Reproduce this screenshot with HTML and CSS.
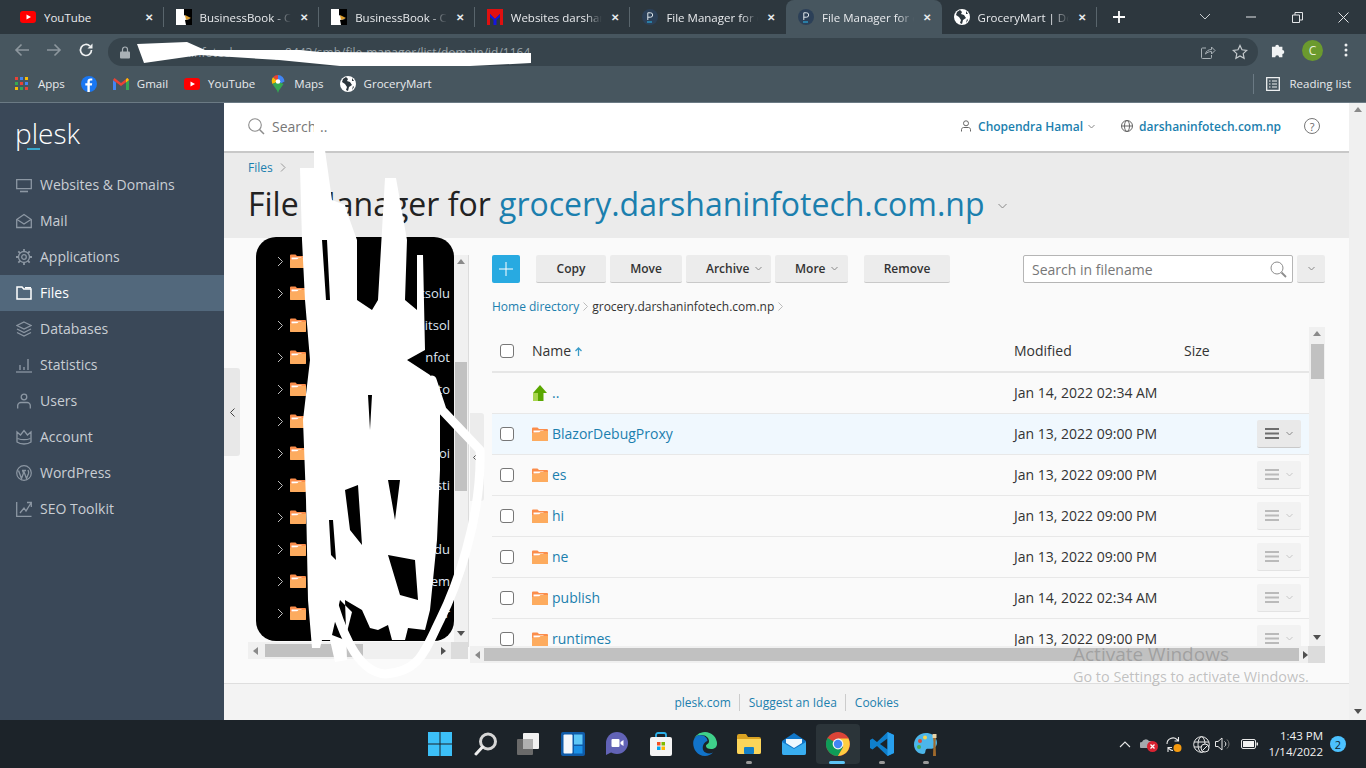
FILE: index.html
```html
<!DOCTYPE html>
<html>
<head>
    <meta charset="UTF-8">
    <title>File Manager for grocery.darshaninfotech.com.np</title>
    <link rel="stylesheet" href="styles.css">
</head>
<body>
    <svg class="defs" width="0" height="0">
        <symbol id="folder" viewBox="0 0 16 14">
            <path d="M0 1.500a1 1 0 0 1 1-1h4.500l1.500 1.500h8a1 1 0 0 1 1 1V13a1 1 0 0 1-1 1H1a1 1 0 0 1-1-1z" fill="#fb8d4b"/>
            <path d="M1.500 3.500h10v2h-10z" fill="#fff"/>
            <path d="M0 6l7-.5 1.500-1.500H16V13a1 1 0 0 1-1 1H1a1 1 0 0 1-1-1z" fill="#fdab5e"/>
        </symbol>
        <symbol id="menu" viewBox="0 0 14 11">
            <path d="M0 0h14v2H0zM0 4.500h14v2H0zM0 9h14v2H0z" fill="#6e6e6e"/>
        </symbol>
        <symbol id="plesk-p" viewBox="0 0 16 16">
            <circle cx="8" cy="8" r="8" fill="#2c4058"/>
            <path d="M5.800 11V3.800h2.700a2.200 2.200 0 0 1 0 4.400H5.800" fill="none" stroke="#dfe6ec" stroke-width="1"/>
            <path d="M5 13h5" stroke="#2aa7d8" stroke-width="1.200"/>
        </symbol>
        <symbol id="bird" viewBox="0 0 16 16">
            <path d="M0 0h16v16H0z" fill="#fff"/>
            <path d="M8 0h8v16H10L9 11l5-1-6-4z" fill="#000"/>
            <path d="M9 6l6 3-5 2z" fill="#d99a28"/>
        </symbol>
        <symbol id="globe" viewBox="0 0 16 16">
            <circle cx="8" cy="8" r="8" fill="#fff"/>
            <path d="M6 1L3 3 2 6l3 2 2 3-1 3 2 1 1-4 3-2-2-3-3-1 1-2zM12 2l2 3-2 0zM13 10l1 1-2 3z" fill="#2c363d"/>
        </symbol>
        <symbol id="yt" viewBox="0 0 16 12">
            <rect width="16" height="12" rx="3" fill="#f00"/>
            <path d="M6.500 3.500v5L11 6z" fill="#fff"/>
        </symbol>
        <symbol id="caret" viewBox="0 0 7 5">
            <path d="M.5 1l3 3 3-3" fill="none" stroke="#888"/>
        </symbol>
        <symbol id="tree-chev" viewBox="0 0 7 11">
            <path d="M1 1l4.500 4.500L1 10" fill="none" stroke="#bdbdbd" stroke-width="1"/>
        </symbol>
    </svg>

    <!-- browser chrome -->
    <div class="tabstrip">
        <div class="tab sep"><svg class="fav" width="16" height="12"><use href="#yt"/></svg><span class="tab-title">YouTube</span><span class="tab-x">✕</span></div>
        <div class="tab sep"><svg class="fav" width="16" height="16"><use href="#bird"/></svg><span class="tab-title">BusinessBook - C</span><span class="tab-x">✕</span></div>
        <div class="tab sep"><svg class="fav" width="16" height="16"><use href="#bird"/></svg><span class="tab-title">BusinessBook - C</span><span class="tab-x">✕</span></div>
        <div class="tab sep"><svg class="fav" width="16" height="16" viewBox="0 0 16 16"><path d="M0 0h16v16h-3V5L8 10 3 5v11H0z" fill="#e01010"/><path d="M3 5l5 5 5-5v3l-3.500 3v5h-3v-5L3 8z" fill="#1515e0"/></svg><span class="tab-title">Websites darshan</span><span class="tab-x">✕</span></div>
        <div class="tab"><svg class="fav" width="16" height="16"><use href="#plesk-p"/></svg><span class="tab-title">File Manager for c</span><span class="tab-x">✕</span></div>
        <div class="tab active"><svg class="fav" width="16" height="16"><use href="#plesk-p"/></svg><span class="tab-title">File Manager for c</span><span class="tab-x">✕</span></div>
        <div class="tab sep"><svg class="fav" width="16" height="16"><use href="#globe"/></svg><span class="tab-title">GroceryMart | Do</span><span class="tab-x">✕</span></div>
        <svg class="newtab" width="14" height="14" viewBox="0 0 14 14"><path d="M7 1v12M1 7h12" stroke="#fff" stroke-width="1.800"/></svg>
        <div class="winctl">
            <span><svg width="12" height="8" viewBox="0 0 12 8"><path d="M1 1l5 5 5-5" fill="none" stroke="#c8cdd0"/></svg></span>
            <span><svg width="10" height="2" viewBox="0 0 10 2"><path d="M0 1h10" stroke="#e4e6e8"/></svg></span>
            <span><svg width="11" height="11" viewBox="0 0 11 11"><path d="M.5 3h7v7.500h-7zM3 3V.5h7.500V8H8" fill="none" stroke="#e4e6e8"/></svg></span>
            <span><svg width="11" height="11" viewBox="0 0 11 11"><path d="M.5.5l10 10M10.500.5l-10 10" stroke="#e4e6e8"/></svg></span>
        </div>
    </div>

    <div class="toolbar">
        <span class="nav"><svg width="16" height="14" viewBox="0 0 16 14"><path d="M15 7H2M7.500 1.500L2 7l5.500 5.500" fill="none" stroke="#8d979e" stroke-width="1.600"/></svg></span>
        <span class="nav"><svg width="16" height="14" viewBox="0 0 16 14"><path d="M1 7h13M8.500 1.500L14 7l-5.500 5.500" fill="none" stroke="#8d979e" stroke-width="1.600"/></svg></span>
        <span class="nav"><svg width="16" height="16" viewBox="0 0 16 16"><path d="M13.500 8a5.500 5.500 0 1 1-1.600-3.900" fill="none" stroke="#eef0f1" stroke-width="1.700"/><path d="M14.500 1.500v5h-5z" fill="#eef0f1"/></svg></span>
        <div class="address">
            <svg width="10" height="13" viewBox="0 0 10 13"><path d="M2.500 6V3.500a2.500 2.500 0 0 1 5 0V6" fill="none" stroke="#a9b1b6" stroke-width="1.200"/><rect y="5.500" width="10" height="7" rx="1" fill="#a9b1b6"/></svg>
            <span class="url">darshaninfotech.com.np:8443/smb/file-manager/list/domain/id/1164</span>
            <svg class="addr-share" width="16" height="16" viewBox="0 0 16 16"><path d="M6 4H2.500a1 1 0 0 0-1 1v8.500a1 1 0 0 0 1 1h8a1 1 0 0 0 1-1V11" fill="none" stroke="#a9b1b6"/><path d="M5.500 10c.5-3 3-4.500 6-4.500V3l3.500 3.500L11.500 10V7.500c-2.500 0-4.500 1-6 2.500z" fill="none" stroke="#a9b1b6"/></svg>
            <svg width="16" height="16" viewBox="0 0 16 16"><path d="M8 1.500l2 4.300 4.700.6-3.500 3.200.9 4.700L8 12l-4.100 2.300.9-4.700L1.300 6.400 6 5.800z" fill="none" stroke="#c6cbce" stroke-width="1.200"/></svg>
        </div>
        <svg class="ext" width="16" height="16" viewBox="0 0 16 16"><path d="M1 5h3.500a2 2 0 1 1 4 0H12v3.500a2 2 0 1 1 0 4V16H8.500a2 2 0 1 0-4 0H1z" fill="#f1f3f4" transform="scale(.95)"/></svg>
        <span class="avatar">C</span>
        <svg class="dots" width="4" height="14" viewBox="0 0 4 14"><circle cx="2" cy="2" r="1.500" fill="#eef0f1"/><circle cx="2" cy="7" r="1.500" fill="#eef0f1"/><circle cx="2" cy="12" r="1.500" fill="#eef0f1"/></svg>
    </div>

    <div class="bookmarks">
        <span class="bm bm-apps"><svg width="14" height="14" viewBox="0 0 14 14"><path d="M0 0h3v3H0z" fill="#ea4335"/><path d="M5 0h3v3H5z" fill="#4285f4"/><path d="M10 0h3v3h-3z" fill="#fbbc04"/><path d="M0 5h3v3H0z" fill="#34a853"/><path d="M5 5h3v3H5z" fill="#ea4335"/><path d="M10 5h3v3h-3z" fill="#4285f4"/><path d="M0 10h3v3H0z" fill="#fbbc04"/><path d="M5 10h3v3H5z" fill="#34a853"/><path d="M10 10h3v3h-3z" fill="#ea4335"/></svg>Apps</span>
        <span class="bm"><svg width="16" height="16" viewBox="0 0 16 16"><circle cx="8" cy="8" r="8" fill="#1a77f2"/><path d="M8.800 16V9.500h2l.4-2.300H8.800V5.800c0-.7.300-1.200 1.300-1.200h1.200v-2C10.900 2.500 10.300 2.400 9.600 2.400 7.700 2.400 6.400 3.500 6.400 5.500v1.700H4.300v2.300h2.100V16z" fill="#fff"/></svg></span>
        <span class="bm"><svg width="16" height="12" viewBox="0 0 16 12"><path d="M0 2v10h3V4.500z" fill="#4285f4"/><path d="M16 2v10h-3V4.500z" fill="#34a853"/><path d="M0 2l8 6 8-6-1.500-2L8 5 1.500 0z" fill="#ea4335"/><path d="M13 4.500L16 2l-1.500-2L13 1z" fill="#fbbc04"/></svg>Gmail</span>
        <span class="bm"><svg width="16" height="12"><use href="#yt"/></svg>YouTube</span>
        <span class="bm bm-maps"><svg width="14" height="18" viewBox="0 0 14 18"><path d="M7 0a6.500 6.500 0 0 1 6.500 6.500L7 10z" fill="#4285f4"/><path d="M7 0A6.500 6.500 0 0 0 2 2.300L7 6.500z" fill="#ea4335"/><path d="M2 2.300A6.500 6.500 0 0 0 1.500 9L7 6.500z" fill="#fbbc04"/><path d="M1.500 9C3 12 6 14 7 18c1-4 4-6 5.500-9L7 6.500z" fill="#34a853"/><circle cx="7" cy="6.500" r="2.300" fill="#fff"/></svg>Maps</span>
        <span class="bm"><svg width="16" height="16"><use href="#globe"/></svg>GroceryMart</span>
        <span class="reading"><svg width="14" height="14" viewBox="0 0 14 14"><path d="M.7.700h12.600v12.600H.7z" fill="none" stroke="#eef0f1" stroke-width="1.300"/><path d="M3 4h1.500M6 4h5M3 7h1.500M6 7h5M3 10h1.500M6 10h5" stroke="#eef0f1"/></svg>Reading list</span>
    </div>

    <!-- plesk app -->
    <div class="app">
        <aside class="sidebar">
            <div class="logo">plesk<i class="logo-bar"></i></div>
            <a class="side-item"><svg width="16" height="16" viewBox="0 0 16 16"><path d="M.7 2.700h14.600v9H.7z" fill="none" stroke="currentColor" stroke-width="1.300"/><path d="M4 14.500h8" stroke="currentColor" stroke-width="1.600"/></svg>Websites &amp; Domains</a>
            <a class="side-item"><svg width="16" height="16" viewBox="0 0 16 16"><path d="M.7 6.500L8 1.500l7.300 5v8H.7z" fill="none" stroke="currentColor" stroke-width="1.300"/><path d="M1 6.500L8 11l7-4.500" fill="none" stroke="currentColor" stroke-width="1.300"/></svg>Mail</a>
            <a class="side-item"><svg width="16" height="16" viewBox="0 0 16 16"><circle cx="8" cy="8" r="2.300" fill="none" stroke="currentColor" stroke-width="1.300"/><circle cx="8" cy="8" r="5.500" fill="none" stroke="currentColor" stroke-width="1.300"/><path d="M8 0v3M8 13v3M0 8h3M13 8h3M2.300 2.300l2 2M11.700 11.700l2 2M13.700 2.300l-2 2M4.300 11.700l-2 2" stroke="currentColor" stroke-width="1.800"/></svg>Applications</a>
            <a class="side-item active"><svg width="16" height="16" viewBox="0 0 16 16"><path d="M1 2h5l1.800 2H15v10H1z" fill="none" stroke="currentColor" stroke-width="1.500"/><path d="M9 2h6v1.500H9z" fill="currentColor"/></svg>Files</a>
            <a class="side-item"><svg width="16" height="16" viewBox="0 0 16 16"><path d="M8 1l7 3.500L8 8 1 4.500z" fill="none" stroke="currentColor" stroke-width="1.200"/><path d="M1 8l7 3.500L15 8M1 11.500L8 15l7-3.500" fill="none" stroke="currentColor" stroke-width="1.300"/></svg>Databases</a>
            <a class="side-item"><svg width="16" height="16" viewBox="0 0 16 16"><path d="M0 15h16" stroke="currentColor" stroke-width="1.300"/><path d="M4 8v5M8 10v3M12 2v11" stroke="currentColor" stroke-width="1.400"/></svg>Statistics</a>
            <a class="side-item"><svg width="16" height="16" viewBox="0 0 16 16"><circle cx="8" cy="4" r="2.800" fill="none" stroke="currentColor" stroke-width="1.300"/><path d="M1.700 15.500V12.500c0-2 2-3 3-3h6.600c1 0 3 1 3 3v3" fill="none" stroke="currentColor" stroke-width="1.300"/></svg>Users</a>
            <a class="side-item"><svg width="16" height="16" viewBox="0 0 16 16"><path d="M1 3l3.500 3L8 1.500 11.500 6 15 3v10c-2 1.500-4.500 2-7 2s-5-.5-7-2z" fill="none" stroke="currentColor" stroke-width="1.300"/><path d="M1.500 9.500c4 1.500 9 1.500 13 0" fill="none" stroke="currentColor" stroke-width="1.300"/></svg>Account</a>
            <a class="side-item"><svg width="16" height="16" viewBox="0 0 16 16"><circle cx="8" cy="8" r="7.300" fill="none" stroke="currentColor" stroke-width="1.200"/><path d="M2.500 5.500l3 8 2-5.500-1-2.500M6 5.500h4M7.500 5.500l3 8 2-5c.5-1.500 0-2.500-.5-3.500" fill="none" stroke="currentColor" stroke-width="1.300"/></svg>WordPress</a>
            <a class="side-item"><svg width="16" height="16" viewBox="0 0 16 16"><path d="M.7 1v14.300H15.500" fill="none" stroke="currentColor" stroke-width="1.300"/><path d="M4 12l4-5 2 3 5-8M11 1.500h4.300V6" fill="none" stroke="currentColor" stroke-width="1.300"/></svg>SEO Toolkit</a>
        </aside>

        <div class="page">
            <header class="topbar">
                <svg width="17" height="17" viewBox="0 0 17 17"><circle cx="7" cy="7" r="6.300" fill="none" stroke="#8c8c8c" stroke-width="1.100"/><path d="M11.500 11.500l4.500 4.500" stroke="#8c8c8c" stroke-width="1.500"/></svg>
                <span class="top-search">Search ..</span>
                <svg class="user-ico" width="12" height="12" viewBox="0 0 12 12"><circle cx="6" cy="3.300" r="2.500" fill="none" stroke="#666"/><path d="M1.500 11.500V9.500c0-1 1-2 2-2h5c1 0 2 1 2 2v2" fill="none" stroke="#666"/></svg>
                <a class="top-link">Chopendra Hamal</a>
                <svg class="mini" width="7" height="5"><use href="#caret"/></svg>
                <svg class="globe-ico" width="12" height="12" viewBox="0 0 12 12"><circle cx="6" cy="6" r="5.500" fill="none" stroke="#666"/><ellipse cx="6" cy="6" rx="2.500" ry="5.500" fill="none" stroke="#666"/><path d="M.5 6h11" stroke="#666"/></svg>
                <a class="top-link">darshaninfotech.com.np</a>
                <span class="help">?</span>
            </header>

            <section class="band">
                <div class="crumb"><a>Files</a><svg width="6" height="9" viewBox="0 0 6 9"><path d="M1 .5l4 4-4 4" fill="none" stroke="#999"/></svg></div>
                <h1>File Manager for <a>grocery.darshaninfotech.com.np</a><svg width="9" height="6" viewBox="0 0 9 6"><path d="M.5 1l4 4 4-4" fill="none" stroke="#888"/></svg></h1>
            </section>

            <main class="main">
                <div class="tree-pane">
                    <div class="tree-top">
                        <div class="tree">
                            <div class="tree-row"><svg width="7" height="11"><use href="#tree-chev"/></svg><svg width="16" height="14"><use href="#folder"/></svg><span></span></div>
                            <div class="tree-row"><svg width="7" height="11"><use href="#tree-chev"/></svg><svg width="16" height="14"><use href="#folder"/></svg><span>itsolu</span></div>
                            <div class="tree-row"><svg width="7" height="11"><use href="#tree-chev"/></svg><svg width="16" height="14"><use href="#folder"/></svg><span>itsol</span></div>
                            <div class="tree-row"><svg width="7" height="11"><use href="#tree-chev"/></svg><svg width="16" height="14"><use href="#folder"/></svg><span>nfot</span></div>
                            <div class="tree-row"><svg width="7" height="11"><use href="#tree-chev"/></svg><svg width="16" height="14"><use href="#folder"/></svg><span>to</span></div>
                            <div class="tree-row"><svg width="7" height="11"><use href="#tree-chev"/></svg><svg width="16" height="14"><use href="#folder"/></svg><span></span></div>
                            <div class="tree-row"><svg width="7" height="11"><use href="#tree-chev"/></svg><svg width="16" height="14"><use href="#folder"/></svg><span>an noi</span></div>
                            <div class="tree-row"><svg width="7" height="11"><use href="#tree-chev"/></svg><svg width="16" height="14"><use href="#folder"/></svg><span>sti</span></div>
                            <div class="tree-row"><svg width="7" height="11"><use href="#tree-chev"/></svg><svg width="16" height="14"><use href="#folder"/></svg><span></span></div>
                            <div class="tree-row"><svg width="7" height="11"><use href="#tree-chev"/></svg><svg width="16" height="14"><use href="#folder"/></svg><span>du</span></div>
                            <div class="tree-row"><svg width="7" height="11"><use href="#tree-chev"/></svg><svg width="16" height="14"><use href="#folder"/></svg><span>em</span></div>
                            <div class="tree-row"><svg width="7" height="11"><use href="#tree-chev"/></svg><svg width="16" height="14"><use href="#folder"/></svg><span>r</span></div>
                        </div>
                        <div class="vbar tree-vbar"><b class="arr up"></b><div class="tree-thumb"></div><b class="arr down"></b></div>
                    </div>
                    <div class="hbar tree-hbar"><b class="arr left"></b><div class="tree-hthumb"></div><b class="arr right"></b><em class="corner"></em></div>
                </div>

                <div class="splitter"><div class="split-handle"><svg width="4" height="7" viewBox="0 0 4 7"><path d="M3.500.5l-3 3 3 3" fill="none" stroke="#555"/></svg></div></div>

                <div class="files">
                    <div class="actions">
                        <button class="btn-plus"><svg width="16" height="16" viewBox="0 0 16 16"><path d="M8 1v14M1 8h14" stroke="#fff"/></svg></button>
                        <button class="btn w-copy">Copy</button>
                        <button class="btn w-move">Move</button>
                        <button class="btn w-archive">Archive<svg width="7" height="5"><use href="#caret"/></svg></button>
                        <button class="btn w-more">More<svg width="7" height="5"><use href="#caret"/></svg></button>
                        <button class="btn w-remove">Remove</button>
                        <div class="search-box">Search in filename<svg width="17" height="17" viewBox="0 0 17 17"><circle cx="7" cy="7" r="6" fill="none" stroke="#8c8c8c"/><path d="M11.500 11.500l4.500 4.500" stroke="#8c8c8c" stroke-width="1.800"/></svg></div>
                        <button class="btn w-drop"><svg width="7" height="5"><use href="#caret"/></svg></button>
                    </div>
                    <div class="path"><a>Home directory</a><svg width="5" height="9" viewBox="0 0 5 9"><path d="M.5.500l4 4-4 4" fill="none" stroke="#bbb"/></svg><span>grocery.darshaninfotech.com.np</span><svg width="5" height="9" viewBox="0 0 5 9"><path d="M.5.500l4 4-4 4" fill="none" stroke="#bbb"/></svg></div>

                    <div class="list-area">
                        <div class="list">
                            <div class="row head"><span class="cell-check"><i class="check"></i></span><span class="name-head">Name<svg width="7" height="9" viewBox="0 0 7 9"><path d="M3.500 9V1.500M.5 4l3-3 3 3" fill="none" stroke="#3a9bc7" stroke-width="1.300"/></svg></span><span>Modified</span><span>Size</span></div>
                            <div class="row"><span></span><span class="name"><svg width="16" height="16" viewBox="0 0 16 16"><path d="M1 9h3v7H1z" fill="#a8d44e"/><path d="M8 0l7 8h-3.500v8H4V8H1z" fill="#5aa700"/><path d="M1 8h5v8H3c-1 0-2-1-2-2z" fill="#a8d44e"/></svg><a>..</a></span><span>Jan 14, 2022 02:34 AM</span><span></span></div>
                            <div class="row hover"><span class="cell-check"><i class="check"></i></span><span class="name"><svg width="16" height="14"><use href="#folder"/></svg><a>BlazorDebugProxy</a></span><span>Jan 13, 2022 09:00 PM</span><span class="cell-act"><span class="act"><svg width="14" height="11"><use href="#menu"/></svg><svg width="7" height="5"><use href="#caret"/></svg></span></span></div>
                            <div class="row"><span class="cell-check"><i class="check"></i></span><span class="name"><svg width="16" height="14"><use href="#folder"/></svg><a>es</a></span><span>Jan 13, 2022 09:00 PM</span><span class="cell-act"><span class="act dim"><svg width="14" height="11"><use href="#menu"/></svg><svg width="7" height="5"><use href="#caret"/></svg></span></span></div>
                            <div class="row"><span class="cell-check"><i class="check"></i></span><span class="name"><svg width="16" height="14"><use href="#folder"/></svg><a>hi</a></span><span>Jan 13, 2022 09:00 PM</span><span class="cell-act"><span class="act dim"><svg width="14" height="11"><use href="#menu"/></svg><svg width="7" height="5"><use href="#caret"/></svg></span></span></div>
                            <div class="row"><span class="cell-check"><i class="check"></i></span><span class="name"><svg width="16" height="14"><use href="#folder"/></svg><a>ne</a></span><span>Jan 13, 2022 09:00 PM</span><span class="cell-act"><span class="act dim"><svg width="14" height="11"><use href="#menu"/></svg><svg width="7" height="5"><use href="#caret"/></svg></span></span></div>
                            <div class="row"><span class="cell-check"><i class="check"></i></span><span class="name"><svg width="16" height="14"><use href="#folder"/></svg><a>publish</a></span><span>Jan 14, 2022 02:34 AM</span><span class="cell-act"><span class="act dim"><svg width="14" height="11"><use href="#menu"/></svg><svg width="7" height="5"><use href="#caret"/></svg></span></span></div>
                            <div class="row"><span class="cell-check"><i class="check"></i></span><span class="name"><svg width="16" height="14"><use href="#folder"/></svg><a>runtimes</a></span><span>Jan 13, 2022 09:00 PM</span><span class="cell-act"><span class="act dim"><svg width="14" height="11"><use href="#menu"/></svg><svg width="7" height="5"><use href="#caret"/></svg></span></span></div>
                        </div>
                        <div class="vbar list-vbar"><b class="arr up"></b><div class="list-thumb"></div><b class="arr down"></b></div>
                    </div>
                    <div class="hbar list-hbar"><b class="arr left"></b><div class="list-hthumb"></div><b class="arr right"></b><em class="corner"></em></div>
                </div>
            </main>

            <footer class="footer"><a>plesk.com</a><a>Suggest an Idea</a><a>Cookies</a></footer>
            <div class="collapse"><svg width="5" height="9" viewBox="0 0 5 9"><path d="M4.500.500l-4 4 4 4" fill="none" stroke="#444"/></svg></div>
        </div>

        <div class="vbar page-vbar"><b class="arr up"></b><b class="arr down"></b></div>
    </div>

    <!-- windows taskbar -->
    <div class="taskbar">
        <div class="task-icons">
            <span class="ti"><svg width="24" height="24" viewBox="0 0 24 24"><path d="M0 0h11.500v11.500H0zM12.500 0H24v11.500H12.500zM0 12.500h11.500V24H0zM12.500 12.500H24V24H12.500z" fill="#3cc0f8"/></svg></span>
            <span class="ti"><svg class="ti-search" width="24" height="24" viewBox="0 0 24 24"><circle cx="14" cy="9.500" r="7.500" fill="none" stroke="#d6d6d6" stroke-width="3"/><path d="M8.500 15L2 22" stroke="#eee" stroke-width="3" stroke-linecap="round"/></svg></span>
            <span class="ti"><svg width="24" height="24" viewBox="0 0 24 24"><rect x="7" y="1" width="16" height="16" rx="1" fill="#f1f1f1"/><rect x="1" y="7" width="16" height="16" rx="1" fill="#6a6a6a"/><rect x="7" y="7" width="10" height="10" fill="#b0b0b0"/></svg></span>
            <span class="ti"><svg width="24" height="24" viewBox="0 0 24 24"><rect width="24" height="24" rx="2" fill="#0f5ba8"/><rect x="2.500" y="2.500" width="9" height="19" rx="1" fill="#f3f7fb"/><rect x="13" y="2.500" width="8.500" height="10" fill="#5ec7f7"/><rect x="13" y="14" width="8.500" height="7.500" fill="#1b92e8"/></svg></span>
            <span class="ti"><svg width="24" height="24" viewBox="0 0 24 24"><circle cx="12" cy="11" r="11" fill="#6263b6"/><path d="M1 11v12l6-3z" fill="#6263b6"/><rect x="6.500" y="7" width="8" height="8" rx="1" fill="#fff"/><path d="M15.500 10l3-2v6l-3-2z" fill="#fff"/></svg></span>
            <span class="ti"><svg width="24" height="24" viewBox="0 0 24 24"><path d="M7 7V3a2 2 0 0 1 2-2h6a2 2 0 0 1 2 2v4" fill="none" stroke="#2bb0ea" stroke-width="1.800"/><rect x="1" y="5" width="22" height="19" rx="2" fill="#f4f4f4"/><path d="M8 10h3.500v3.500H8z" fill="#f25022"/><path d="M12.500 10H16v3.500h-3.500z" fill="#7fba00"/><path d="M8 14.500h3.500V18H8z" fill="#00a4ef"/><path d="M12.500 14.500H16V18h-3.500z" fill="#ffb900"/></svg></span>
            <span class="ti"><svg width="24" height="24" viewBox="0 0 24 24"><path d="M12 0a12 12 0 0 1 12 12c0 3-2.500 5-6 5-3 0-5-1-5-3 0-2 3-1.500 3-5 0-3-3-6-8-6C3.500 3 1.500 5.500.500 8.500 2 3.500 6.500 0 12 0z" fill="#3fd08a"/><path d="M.500 8.500C-1 15 3 24 12 24c3 0 6-1.500 8-3.500-2 1-5 1.500-7.500 0C9 18.500 9 14 11.500 11c1-1.300 2.500-2 3-2 0-3-3-6-8-6C3.500 3 1.500 5.500.500 8.500z" fill="#1173c9"/></svg></span>
            <span class="ti tick"><svg width="24" height="20" viewBox="0 0 24 20"><path d="M0 2a2 2 0 0 1 2-2h7l2 3h11a2 2 0 0 1 2 2v13a2 2 0 0 1-2 2H2a2 2 0 0 1-2-2z" fill="#d9a222"/><path d="M0 5h24v13a2 2 0 0 1-2 2H2a2 2 0 0 1-2-2z" fill="#fcd55a"/><rect x="7" y="13" width="10" height="7" rx="1" fill="#1480c8"/></svg></span>
            <span class="ti"><svg width="24" height="22" viewBox="0 0 24 22"><path d="M0 8l12-8 12 8v12a2 2 0 0 1-2 2H2a2 2 0 0 1-2-2z" fill="#1076c8"/><path d="M0 9l12 7 12-7v11a2 2 0 0 1-2 2H2a2 2 0 0 1-2-2z" fill="#39aef0"/><path d="M4 6h16v4l-8 5-8-5z" fill="#eef8fe"/></svg></span>
            <span class="ti on"><svg width="24" height="24" viewBox="0 0 24 24"><circle cx="12" cy="12" r="12" fill="#db4437"/><path d="M12 12L1.600 6A12 12 0 0 0 12 24l5.200-9z" fill="#0f9d58"/><path d="M12 6.500h10.400A12 12 0 0 1 12 24l5.200-9z" fill="#ffcd40"/><circle cx="12" cy="12" r="5.400" fill="#f1f3f4"/><circle cx="12" cy="12" r="4.200" fill="#4285f4"/></svg></span>
            <span class="ti tick"><svg width="24" height="24" viewBox="0 0 24 24"><path d="M17.500 0L24 3v18l-6.500 3L7 14l-4.500 3.500L0 16V8l2.500-1.500L7 10z" fill="#0f7fcc"/><path d="M17.500 6.500L10 12l7.500 5.500z" fill="#1c2329"/><path d="M17.500 0L24 3v18l-6.500 3z" fill="#28a0ee"/></svg></span>
            <span class="ti tick"><svg width="24" height="24" viewBox="0 0 24 24"><path d="M12 1C5 1 0 6.500 0 12.500 0 18 4 22 9 22c3 0 2-3 3-4.500 1-1.500 5 0 8-1.500 3-1.500 3.500-5 2.500-8C21 3.500 17 1 12 1z" fill="#4cb6ea"/><circle cx="6" cy="9" r="2" fill="#d84a3a"/><circle cx="11" cy="5.500" r="2" fill="#f7d24b"/><circle cx="5" cy="15" r="2" fill="#4caf50"/><path d="M19 5h3l-.5 5 .5 14h-3l.5-14z" fill="#a06a2c"/><path d="M18.500 2h4v4h-4z" fill="#e7d3a6"/></svg></span>
        </div>
        <div class="tray">
            <svg width="12" height="7" viewBox="0 0 12 7"><path d="M1 6l5-5 5 5" fill="none" stroke="#e8e8e8" stroke-width="1.100"/></svg>
            <svg class="tray-cloud" width="18" height="16" viewBox="0 0 18 16"><path d="M2 12a3 3 0 0 1 0-6 4 4 0 0 1 7-1 3.500 3.500 0 0 1 4 3H10v4z" fill="#a4a9ad"/><circle cx="12.500" cy="10.500" r="5.500" fill="#d92332"/><path d="M10.500 8.500l4 4M14.500 8.500l-4 4" stroke="#fff" stroke-width="1.300"/></svg>
            <svg class="tray-sync" width="18" height="18" viewBox="0 0 18 18"><path d="M2 9a6 6 0 0 1 10-4.500l1.500 1.500M13.500 2v4h-4M8 15.500a6 6 0 0 1-3.500-1.500L3 12.500M3 17v-4.500h4" fill="none" stroke="#e8e8e8" stroke-width="1.100"/><circle cx="12.500" cy="13" r="4" fill="#f59a0f"/></svg>
            <svg class="tray-globe" width="17" height="17" viewBox="0 0 17 17"><circle cx="8.500" cy="8.500" r="7.800" fill="none" stroke="#e8e8e8"/><ellipse cx="8.500" cy="8.500" rx="3.500" ry="7.800" fill="none" stroke="#e8e8e8"/><path d="M1 6h15M1 11h9" stroke="#e8e8e8"/><circle cx="12" cy="12" r="4" fill="#1c2329" stroke="#e8e8e8"/><path d="M9.500 14.500l5-5" stroke="#e8e8e8"/></svg>
            <svg class="tray-vol" width="16" height="14" viewBox="0 0 16 14"><path d="M.5 4.500H3L7 1v12L3 9.500H.5z" fill="none" stroke="#e8e8e8"/><path d="M9.500 4.500a3 3 0 0 1 0 5" fill="none" stroke="#e8e8e8"/><path d="M12 2.500a6 6 0 0 1 0 9" fill="none" stroke="#777"/></svg>
            <svg class="tray-batt" width="17" height="10" viewBox="0 0 17 10"><rect x=".5" y=".5" width="14" height="9" rx="1.500" fill="none" stroke="#e8e8e8"/><rect x="2" y="2" width="11" height="6" fill="#f2f2f2"/><path d="M15.500 3.500h1.500v3h-1.500z" fill="#e8e8e8"/></svg>
            <div class="clock"><div>1:43 PM</div><div>1/14/2022</div></div>
            <span class="badge">2</span>
        </div>
    </div>

    <div class="watermark">
        <div class="wm-big">Activate Windows</div>
        <div class="wm-small">Go to Settings to activate Windows.</div>
    </div>

    <!-- hand drawn redaction marks from the screenshot -->
    <svg class="scribble" width="1366" height="768" viewBox="0 0 1366 768">
        <path d="M137 44L187 42L205 50L300 50L320 52L531 53L531 63L470 66L340 66L279 60L200 55L144 63z" fill="#fff"/>
        <path fill="#fff" fill-rule="evenodd" d="M314 122L317 122L318 150L325 150L332 200L345 205L348 215L357 240L357 300L372 310L378 300L385 178L396 178L407 240L405 300L417 310L417 255L423 255L425 350L407 360L430 375L440 395L440 470L437 540L430 610L425 630L408 628L405 640L392 640L388 625L378 630L370 628L362 610L345 600L347 660L335 662L330 640L322 640L320 648L312 648L308 600L306 500L303 420L310 360L305 300L302 240L300 168L314 168z
            M322 240L327 240L330 300L326 300z
            M345 490L358 485L362 545L350 530z
            M388 480L400 480L395 520z
            M388 555L415 560L418 600L400 595z
            M329 520L333 520L336 560L331 555z
            M368 395L372 395L370 430z
            M332 635L340 600L352 612L345 640z"/>
        <path d="M432 380L442 410L480 450C482 520 455 590 440 620C425 650 420 672 385 674C360 672 345 640 334 605" fill="none" stroke="#fff" stroke-width="9" stroke-linecap="round" stroke-linejoin="round"/>
    </svg>
</body>
</html>
```

FILE: styles.css
```css
* {
    box-sizing: border-box;
}

html, body {
    margin: 0;
    height: 768px;
    overflow: hidden;
}

body {
    display: flex;
    flex-direction: column;
    font-family: "Open Sans", "Liberation Sans", sans-serif;
    font-size: 14px;
    color: #333;
    background: #fafafa;
}

a {
    color: #1b7fae;
}

svg {
    flex: none;
}

.defs {
    position: absolute;
}

/* Browser tabs */
.tabstrip {
    display: flex;
    align-items: center;
    height: 34px;
    padding-left: 8px;
    background: #2d373e;
    color: #e8eaed;
    font-size: 11.500px;
}

.tab {
    display: flex;
    align-items: center;
    width: 155.600px;
    height: 34px;
    padding: 0 8px 0 12px;
    position: relative;
}

.tab.sep::after {
    content: "";
    position: absolute;
    right: 0;
    top: 7px;
    height: 20px;
    border-right: 1px solid #59656c;
}

.tab.active {
    background: #47565f;
    border-radius: 8px 8px 0 0;
}

.tab-title {
    flex: 1;
    min-width: 0;
    margin-left: 8px;
    white-space: nowrap;
    overflow: hidden;
    -webkit-mask-image: linear-gradient(to right, #000 82%, transparent);
    mask-image: linear-gradient(to right, #000 82%, transparent);
}

.tab:first-child .tab-title {
    -webkit-mask-image: none;
    mask-image: none;
}

.tab-x {
    flex: none;
    width: 14px;
    margin-left: 6px;
    font-size: 10px;
    font-weight: 700;
    text-align: center;
}

.newtab {
    margin-left: 15px;
}

.winctl {
    display: flex;
    margin-left: auto;
}

.winctl span {
    display: flex;
    align-items: center;
    justify-content: center;
    width: 46px;
    height: 32px;
}

/* Address bar */
.toolbar {
    display: flex;
    align-items: center;
    height: 32px;
    padding-left: 6px;
    background: #47565f;
}

.nav {
    display: flex;
    align-items: center;
    justify-content: center;
    width: 32px;
}

.address {
    display: flex;
    align-items: center;
    gap: 16px;
    width: 1150px;
    height: 28px;
    margin-left: 6px;
    margin-top: 4px;
    padding: 0 10px 0 12px;
    border-radius: 14px;
    background: #37444c;
}

.url {
    flex: 1;
    margin-left: -1px;
    color: #98a2a8;
    font-size: 12px;
    white-space: nowrap;
}

.ext {
    margin-left: 13px;
}

.avatar {
    display: flex;
    align-items: center;
    justify-content: center;
    width: 21px;
    height: 21px;
    margin-left: 15px;
    border-radius: 50%;
    background: #6b9a2e;
    color: #e8f0d8;
    font-size: 12px;
}

.dots {
    margin-left: 21px;
}

/* Bookmarks */
.bookmarks {
    display: flex;
    align-items: center;
    gap: 16px;
    height: 37px;
    padding: 0 15px 1px 15px;
    background: #47565f;
    border-bottom: 1px solid #6b7a84;
    color: #e8eaed;
    font-size: 11.500px;
}

.bm {
    display: flex;
    align-items: center;
    gap: 8px;
}

.bm-apps {
    gap: 9px;
}

.bm-maps {
    gap: 9px;
}

.reading {
    display: flex;
    align-items: center;
    gap: 9px;
    margin-left: auto;
    padding-left: 12px;
    border-left: 1px solid #6b7a84;
    height: 20px;
}

/* Plesk */
.app {
    display: flex;
    height: 617px;
    position: relative;
}

.sidebar {
    flex: none;
    width: 224px;
    background: #3a4858;
    color: #c9ced4;
}

.logo {
    position: relative;
    height: 64px;
    padding: 10px 0 0 15px;
    color: #fff;
    font-size: 28px;
    font-weight: 300;
    line-height: 40px;
}

.logo-bar {
    position: absolute;
    left: 27px;
    top: 45px;
    width: 13px;
    height: 2px;
    background: #38a8cc;
}

.side-item {
    display: flex;
    align-items: center;
    gap: 8px;
    height: 36px;
    padding: 0 0 2px 16px;
    color: #c9ced4;
}

.side-item svg {
    margin-top: 2px;
    color: #8c97a3;
}

.side-item.active {
    background: #52687c;
    color: #fff;
}

.side-item.active svg {
    color: #fff;
}

.page {
    flex: 1;
    display: flex;
    flex-direction: column;
    min-width: 0;
    position: relative;
}

.topbar {
    display: flex;
    align-items: center;
    height: 50px;
    padding: 0 29px 2px 24px;
    background: #fff;
    border-bottom: 2px solid #c8c8c8;
    font-size: 12px;
}

.top-search {
    flex: 1;
    margin-left: 7px;
    color: #777;
    font-size: 14px;
}

.top-link {
    margin-left: 6px;
    font-weight: 600;
}

.mini {
    margin-left: 5px;
}

.globe-ico {
    margin-left: 26px;
}

.help {
    display: flex;
    align-items: center;
    justify-content: center;
    width: 16px;
    height: 16px;
    margin-left: 23px;
    border: 1px solid #777;
    border-radius: 50%;
    color: #666;
    font-size: 11px;
}

.band {
    height: 85px;
    padding: 4px 24px 0;
    background: #ebebeb;
}

.crumb {
    display: flex;
    align-items: center;
    gap: 7px;
    height: 20px;
    font-size: 12px;
}

.band h1 {
    display: flex;
    align-items: center;
    margin: 4px 0 0;
    height: 44px;
    color: #222;
    font-size: 32px;
    font-weight: 400;
    white-space: pre;
}

.band h1 svg {
    margin-left: 13px;
    margin-top: 6px;
}

.main {
    flex: 1;
    display: flex;
    min-height: 0;
    padding: 17px 0 0 24px;
    background: #fafafa;
}

.tree-pane {
    flex: none;
    width: 220px;
}

.tree-top {
    display: flex;
    height: 387px;
    padding-left: 8px;
}

.tree {
    flex: none;
    width: 198px;
    height: 404px;
    margin-top: -18px;
    padding-top: 8px;
    background: #000;
    border-radius: 20px;
    color: #dfe6f2;
    font-size: 13px;
    position: relative;
}

.tree-row {
    display: flex;
    align-items: center;
    gap: 6px;
    height: 32px;
    padding: 0 4px 0 21px;
}

.tree-row span {
    flex: 1;
    text-align: right;
}

.vbar {
    display: flex;
    flex-direction: column;
    align-items: center;
    position: relative;
    background: #f0f0f0;
}

.tree-vbar {
    width: 14px;
}

.tree-thumb {
    width: 12px;
    height: 129px;
    margin: 98px 0 0;
    background: #c1c1c1;
}

.hbar {
    display: flex;
    align-items: center;
    position: relative;
    height: 17px;
    background: #f0f0f0;
}

.tree-hthumb {
    width: 98px;
    height: 13px;
    margin-left: 7px;
    background: #c1c1c1;
}

.tree-hbar .arr.right {
    margin-left: 78px;
}

.list-hbar {
    margin-left: -22px;
    padding-right: 17px;
}

.list-hthumb {
    flex: 1;
    height: 13px;
    margin: 0 4px;
    background: #c1c1c1;
}

.corner {
    position: absolute;
    right: 0;
    top: 0;
    width: 17px;
    height: 17px;
    background: #dcdcdc;
}

.arr {
    display: block;
    flex: none;
    width: 0;
    height: 0;
    border: 4px solid transparent;
}

.arr.up {
    margin-top: 4px;
    border-top: 0;
    border-bottom: 5px solid #8a8a8a;
}

.arr.down {
    margin-top: auto;
    margin-bottom: 6px;
    border-bottom: 0;
    border-top: 5px solid #505050;
}

.arr.left {
    margin-left: 5px;
    border-left: 0;
    border-right: 5px solid #8a8a8a;
}

.arr.right {
    border-right: 0;
    border-left: 5px solid #505050;
}

.splitter {
    flex: none;
    width: 16px;
    height: 392px;
    margin-right: 8px;
    border-left: 1px solid #dcdcdc;
}

.split-handle {
    display: flex;
    align-items: center;
    width: 14px;
    height: 88px;
    margin: 158px 0 0 1px;
    padding-left: 3px;
    background: #ececec;
    border-radius: 0 3px 3px 0;
}

.files {
    flex: none;
    width: 833px;
}

.actions {
    display: flex;
    height: 28px;
    font-size: 12px;
}

.btn-plus {
    display: flex;
    align-items: center;
    justify-content: center;
    width: 28px;
    padding: 0;
    border: 0;
    border-radius: 2px;
    background: #28aae1;
}

.btn {
    display: flex;
    align-items: center;
    justify-content: center;
    gap: 6px;
    margin: 0 0 0 4px;
    padding: 0;
    border: 0;
    border-bottom: 1px solid #c9c9c9;
    border-radius: 2px;
    background: #ececec;
    color: #333;
    font-family: inherit;
    font-size: 12px;
    font-weight: 600;
}

.w-copy {
    width: 70px;
    margin-left: 16px;
}

.w-move {
    width: 72px;
}

.w-archive {
    justify-content: flex-start;
    width: 85px;
    padding-left: 20px;
}

.w-more {
    justify-content: flex-start;
    width: 73px;
    padding-left: 20px;
}

.w-remove {
    width: 86px;
    margin-left: 16px;
}

.w-drop {
    width: 28px;
}

.search-box {
    display: flex;
    align-items: center;
    justify-content: space-between;
    width: 270px;
    margin-left: 73px;
    padding: 0 5px 0 8px;
    border: 1px solid #b5b5b5;
    border-radius: 2px;
    background: #fff;
    color: #777;
    font-size: 14px;
}

.path {
    display: flex;
    align-items: center;
    gap: 4px;
    height: 20px;
    margin: 13px 0 11px;
    font-size: 12px;
}

.list-area {
    display: flex;
    height: 319px;
}

.list {
    flex: none;
    width: 817px;
    height: 319px;
    overflow: hidden;
}

.row {
    display: grid;
    grid-template-columns: 40px 482px 170px 1fr;
    align-items: center;
    height: 41px;
    border-bottom: 1px solid #e8e8e8;
}

.row > span {
    padding-bottom: 2px;
}

.row > .cell-check,
.row > .cell-act {
    padding-bottom: 0;
}

.row.head {
    height: 46px;
    padding-top: 4px;
    border-bottom: 2px solid #e6e6e6;
}

.row.hover {
    background: #f0f8fe;
}

.cell-check {
    display: flex;
    padding-left: 8px;
}

.check {
    display: block;
    width: 14px;
    height: 14px;
    border: 1px solid #777;
    border-radius: 3px;
    background: #fff;
}

.name-head {
    display: flex;
    align-items: center;
    gap: 4px;
}

.name-head svg {
    margin-top: 2px;
}

.name {
    display: flex;
    align-items: center;
    gap: 4px;
}

.name svg {
    margin-top: 2px;
}

.cell-act {
    display: flex;
    justify-content: flex-end;
    padding-right: 8px;
}

.act {
    display: flex;
    align-items: center;
    justify-content: center;
    gap: 7px;
    width: 44px;
    height: 28px;
    background: #e9e9e9;
    border-bottom: 1px solid #c9c9c9;
    border-radius: 2px;
}

.act.dim {
    opacity: .45;
}

.list-vbar {
    width: 16px;
}

.list-thumb {
    width: 13px;
    height: 35px;
    margin-top: 8px;
    background: #c1c1c1;
}

.page-vbar {
    flex: none;
    width: 17px;
}

.footer {
    display: flex;
    align-items: center;
    justify-content: center;
    height: 37px;
    background: #f3f3f3;
    border-top: 1px solid #dedede;
    font-size: 12px;
}

.footer a {
    padding: 0 8.500px;
}

.footer a + a {
    border-left: 1px solid #ccc;
}

.collapse {
    position: absolute;
    left: 0;
    top: 265px;
    display: flex;
    align-items: center;
    justify-content: center;
    width: 16px;
    height: 88px;
    background: #e8e8e8;
    border-radius: 0 3px 3px 0;
}

/* Windows taskbar */
.taskbar {
    display: flex;
    align-items: center;
    height: 48px;
    padding-left: 418px;
    background: #1c2329;
    color: #f2f2f2;
    font-size: 11.500px;
}

.task-icons {
    display: flex;
}

.ti {
    display: flex;
    align-items: center;
    justify-content: center;
    width: 44.200px;
    height: 40px;
    position: relative;
    border-radius: 4px;
}

.ti-search {
    margin-left: 4px;
}

.ti.on {
    background: #2b3439;
}

.ti.on::after,
.ti.tick::after {
    content: "";
    position: absolute;
    bottom: 0;
    left: 19px;
    width: 6px;
    height: 3px;
    border-radius: 2px;
    background: #9a9a9a;
}

.ti.on::after {
    left: 13px;
    width: 16px;
    background: #5cc4f5;
}

.tray {
    display: flex;
    align-items: center;
    margin-left: auto;
    padding-right: 20px;
}

.tray-cloud {
    margin-left: 9px;
}

.tray-sync {
    margin-left: 7px;
}

.tray-globe {
    margin-left: 10px;
}

.tray-vol {
    margin-left: 5px;
}

.tray-batt {
    margin-left: 10px;
}

.clock {
    margin-left: 11px;
    text-align: right;
    line-height: 16px;
}

.badge {
    display: flex;
    align-items: center;
    justify-content: center;
    width: 16px;
    height: 16px;
    margin-left: 7px;
    border-radius: 50%;
    background: #4cc2ff;
    color: #10242e;
    font-size: 11px;
}

/* Overlays */
.watermark {
    position: absolute;
    left: 1073px;
    top: 642px;
    color: rgba(120, 120, 120, .45);
    pointer-events: none;
}

.wm-big {
    font-size: 19px;
    line-height: 24px;
}

.wm-small {
    font-size: 14.400px;
    line-height: 20px;
    margin-top: 1px;
}

.scribble {
    position: absolute;
    left: 0;
    top: 0;
    pointer-events: none;
}
```
